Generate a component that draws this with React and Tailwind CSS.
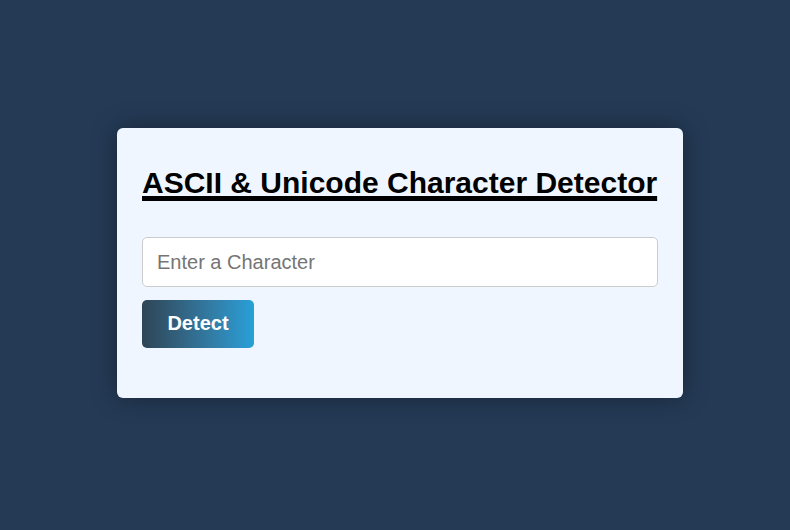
import React from "react";

export default function App() {
  return (
    <div
      className="w-full h-[530px] bg-[#243a55] flex items-center justify-center pl-[10px] pb-[4px]"
      style={{ fontFamily: '"Liberation Sans", Arial, sans-serif' }}
    >
      {/* Card */}
      <div className="w-[566px] bg-[#eff6ff] rounded-[6px] shadow-[0_0_24px_rgba(0,0,0,0.35)] px-[25px] pt-[25px] pb-[50px] flex flex-col">
        <h2 className="mt-[13px] mb-[37px] text-[30px] leading-[34px] font-bold text-black underline decoration-[5px] underline-offset-[3px] whitespace-nowrap">
          ASCII &amp; Unicode Character Detector
        </h2>

        <input
          type="text"
          placeholder="Enter a Character"
          className="h-[50px] w-full bg-white border border-[#cccccc] rounded-[5px] px-[14px] text-[20px] text-black placeholder:text-[#757575] outline-none"
        />

        <button className="mt-[13px] w-[112px] h-[48px] rounded-[5px] bg-gradient-to-r from-[#2e4556] to-[#28a0d9] text-white text-[20px] font-bold pb-[2px]">
          Detect
        </button>
      </div>
    </div>
  );
}
